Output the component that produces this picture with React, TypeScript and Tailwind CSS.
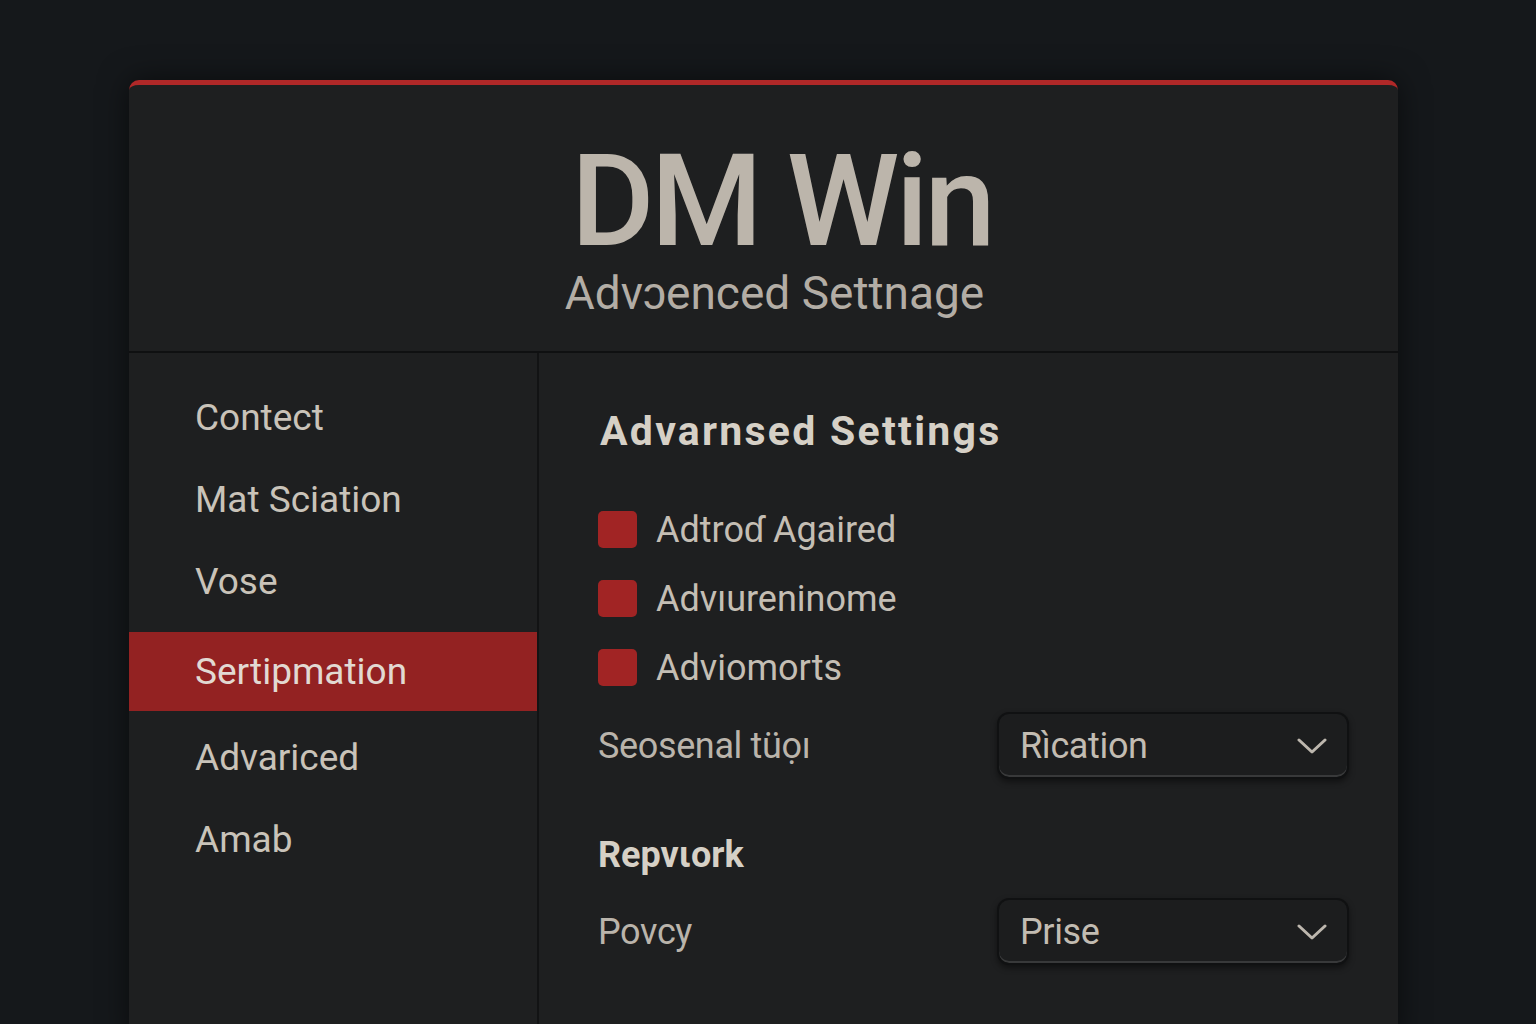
const font = { fontFamily: 'Roboto, "Liberation Sans", sans-serif' }

const navItems = [
  { label: 'Contect' },
  { label: 'Mat Sciation' },
  { label: 'Vose' },
  { label: 'Sertipmation', active: true },
  { label: 'Advariced' },
  { label: 'Amab' },
]

const toggles = ['Adtroɗ Agaired', 'Advıureninome', 'Adviomorts']

function Chevron() {
  return (
    <svg width="30" height="18" viewBox="0 0 30 18" fill="none">
      <path d="M2 3 L15 15 L28 3" stroke="#bdb7ae" strokeWidth="3" strokeLinecap="round" strokeLinejoin="round" />
    </svg>
  )
}

function Select({ value }: { value: string }) {
  return (
    <div className="w-[352px] h-[67px] rounded-[12px] border-2 border-[#101112] bg-[#1c1d1e] shadow-[inset_0_-2px_0_#38393a,0_3px_6px_rgba(0,0,0,0.45)] flex items-center justify-between pl-[21px] pr-[20px]">
      <span className="text-[36px] text-[#c2bcb2] leading-none tracking-[-0.01em]">{value}</span>
      <Chevron />
    </div>
  )
}

export default function App() {
  return (
    <div className="h-[1024px] overflow-hidden bg-[#15181b] pt-[80px]" style={font}>
      <div className="ml-[129px] w-[1269px] h-[960px] bg-[#1e1f20] rounded-t-[10px] border-t-[5px] border-[#b02828] shadow-[0_0_30px_rgba(0,0,0,0.55)] flex flex-col">
        {/* header */}
        <div className="h-[268px] border-b-2 border-[#0f1011] flex flex-col items-center pt-[52px]">
          <h1 className="text-[128px] font-medium leading-none tracking-[-0.03em] text-[#bcb5ab] pl-[36px]">DM Win</h1>
          <p className="mt-[5px] text-[46px] leading-none text-[#b3ada5] pl-[22px]">Advɔenced Settnage</p>
        </div>

        <div className="flex flex-1">
          {/* sidebar */}
          <nav className="w-[410px] border-r-2 border-[#121314] pt-[24px]">
            {navItems.map((item) =>
              item.active ? (
                <div key={item.label} className="mt-[9px] mb-[6px] h-[79px] bg-[#932222] flex items-center pl-[66px] text-[37px] text-[#e2d9d2]">
                  {item.label}
                </div>
              ) : (
                <div key={item.label} className="h-[82px] flex items-center pl-[66px] text-[37px] text-[#c9c3b9]">
                  {item.label}
                </div>
              )
            )}
          </nav>

          {/* settings panel */}
          <div className="flex-1 pl-[59px] pr-[49px] pt-[55px]">
            <h2 className="h-[48px] flex items-center text-[41px] font-bold tracking-[0.055em] text-[#d6d0c6] pl-[2px]">
              Advarnsed Settings
            </h2>

            <div className="mt-[39px] flex flex-col">
              {toggles.map((t) => (
                <label key={t} className="h-[69px] flex items-center gap-[19px]">
                  <span className="w-[39px] h-[37px] rounded-[5px] bg-[#a12424]" />
                  <span className="text-[36px] text-[#c4beb4]">{t}</span>
                </label>
              ))}
            </div>

            <div className="mt-[10px] flex items-center justify-between">
              <span className="text-[36px] text-[#bab4ab] tracking-[-0.01em]">Seosenal tüọı</span>
              <Select value="Rìcation" />
            </div>

            <h3 className="mt-[52px] h-[48px] flex items-center text-[36px] font-bold text-[#d6d0c6]">Repvιork</h3>

            <div className="mt-[19px] flex items-center justify-between">
              <span className="text-[36px] text-[#bab4ab] tracking-[-0.01em]">Povcy</span>
              <Select value="Prise" />
            </div>
          </div>
        </div>
      </div>
    </div>
  )
}
